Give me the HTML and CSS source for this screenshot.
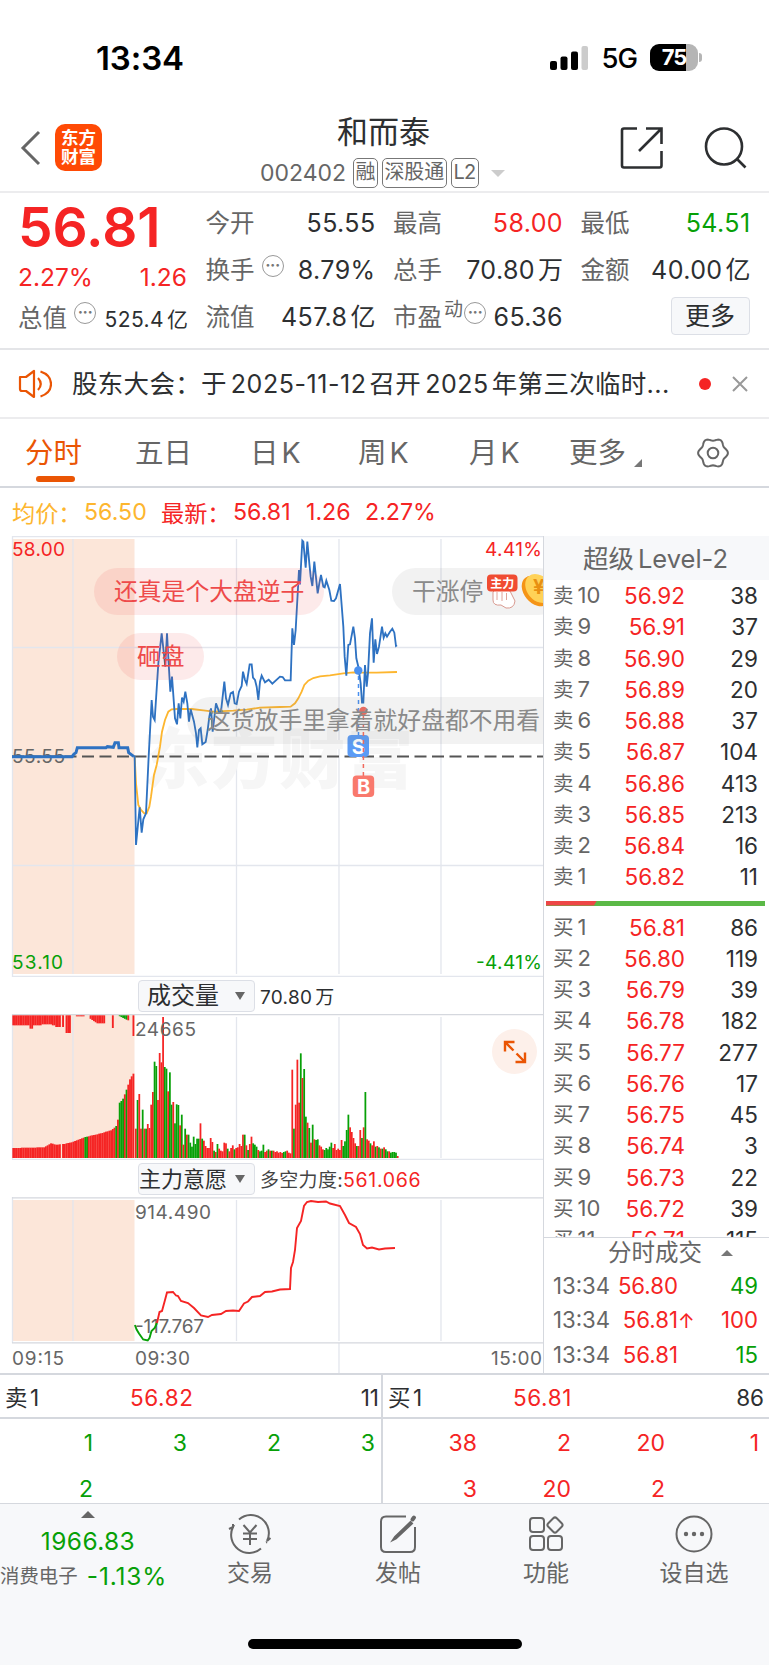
FILE: index.html
```html
<!DOCTYPE html>
<html lang="zh-CN">
<head>
  <meta charset="UTF-8" />
  <meta name="viewport" content="width=device-width, initial-scale=1.0"/>
  <title>和而泰 002402</title>
  <link rel="stylesheet" href="styles.css">
</head>
<body>
  <div class="status-bar">
    <span class="clock">13:34</span>
    <div class="status-right">
      <svg class="signal" width="38" height="24" viewBox="0 0 38 24">
        <rect x="0" y="15" width="7" height="9" rx="2"/>
        <rect x="10.5" y="10.5" width="7" height="13.5" rx="2"/>
        <rect x="21" y="5.500" width="7" height="18.500" rx="2"/>
        <rect x="31.500" y="0" width="6.500" height="24" rx="2" fill="#ccc"/>
      </svg>
      <span class="network">5G</span>
      <div class="battery"><span>75</span></div>
      <i class="battery-tip"></i>
    </div>
  </div>

  <header class="header">
    <svg class="back" width="22" height="36" viewBox="0 0 22 36"><path d="M19 2L3 18L19 34" fill="none" stroke="#666" stroke-width="3"/></svg>
    <div class="logo"><span>东方</span><span>财富</span></div>
    <div class="title">
      <h1>和而泰</h1>
      <div class="code">
        <span class="code-num">002402</span>
        <span class="tag">融</span><span class="tag">深股通</span><span class="tag">L2</span>
        <i class="caret"></i>
      </div>
    </div>
    <svg class="share" width="44" height="44" viewBox="0 0 44 44" fill="none" stroke="#2d2f31" stroke-width="2.600">
      <path d="M17 2.500H4Q2 2.500 2 4.500V39.500Q2 41.500 4 41.500H39.500Q41.500 41.500 41.500 39.500V25M26 2.500H41.500V18M41 3L19 25"/>
    </svg>
    <svg class="search" width="44" height="44" viewBox="0 0 44 44" fill="none" stroke="#2d2f31" stroke-width="2.600">
      <circle cx="20" cy="20.500" r="18"/><path d="M33 33L41.500 41.500"/>
    </svg>
  </header>

  <section class="quote">
    <div class="col main">
      <div class="price red">56.81</div>
      <div class="row change red"><span>2.27%</span><span>1.26</span></div>
      <div class="row total"><span class="label">总值</span><i class="info">···</i><b>525.4<em>亿</em></b></div>
    </div>
    <div class="col">
      <div class="row"><span class="label">今开</span><b>55.55</b></div>
      <div class="row"><span class="label">换手</span><i class="info">···</i><b>8.79%</b></div>
      <div class="row"><span class="label">流值</span><b>457.8<em>亿</em></b></div>
    </div>
    <div class="col">
      <div class="row"><span class="label">最高</span><b class="red">58.00</b></div>
      <div class="row"><span class="label">总手</span><b>70.80<em>万</em></b></div>
      <div class="row"><span class="label">市盈</span><span class="dyn">动</span><i class="info tight">···</i><b>65.36</b></div>
    </div>
    <div class="col">
      <div class="row"><span class="label">最低</span><b class="green">54.51</b></div>
      <div class="row"><span class="label">金额</span><b>40.00<em>亿</em></b></div>
      <div class="row"><button class="more">更多</button></div>
    </div>
  </section>

  <section class="notice">
    <svg width="34" height="30" viewBox="0 0 34 30" fill="none" stroke="#ea5504" stroke-width="2.200" stroke-linejoin="round">
      <path d="M2 8H8L16 2V28L8 22H4Q2 22 2 20ZM20 9Q25.500 15 20 21M22.500 2.500Q33 6 33 15T22.500 27.500"/>
    </svg>
    <p>股东大会：于<span>2025-11-12</span>召开<span>2025</span>年第三次临时...</p>
    <i class="dot"></i>
    <svg class="close" width="16" height="16" viewBox="0 0 16 16" stroke="#999" stroke-width="2"><path d="M1 1L15 15M15 1L1 15"/></svg>
  </section>

  <nav class="tabs">
    <a class="active">分时</a>
    <a>五日</a>
    <a>日<span>K</span></a>
    <a>周<span>K</span></a>
    <a>月<span>K</span></a>
    <a class="tab-more">更多<i></i></a>
    <svg width="34" height="34" viewBox="-17 -17 34 34" fill="none" stroke="#666" stroke-width="2">
      <circle r="5.300"/>
      <path id="gear" stroke-linejoin="round"/>
    </svg>
  </nav>

  <div class="board">
    <div class="charts">
      <div class="legend">
        <span class="avg">均价：</span><span class="avg n1">56.50</span>
        <span class="red n2">最新：</span><span class="red n3">56.81</span><span class="red n4">1.26</span><span class="red">2.27%</span>
      </div>

      <div class="price-chart">
        <svg width="543" height="441" viewBox="0 536 543 441">
          <rect class="band" x="12" y="539" width="122.500" height="435"/>
          <path class="grid" d="M12.500 977V536.500H543.500M12 976.500H543M73 539V974M236.500 539V974M339 539V974M441 539V974M12 647.500H543M12 865.500H543"/>
          <text class="watermark" x="143" y="783" textLength="270">东方财富</text>
          <path class="dash" d="M12 756.500H543"/>
          <text class="tick red" x="12" y="555.500" textLength="53">58.00</text>
          <text class="tick" x="12" y="763" textLength="53">55.55</text>
          <text class="tick green" x="12" y="968.500" textLength="51">53.10</text>
          <text class="tick red" x="485" y="555.500" textLength="57">4.41%</text>
          <text class="tick green" x="476" y="968.500" textLength="66">-4.41%</text>
          <g transform="translate(0 530) scale(.33333)">
            <polyline class="line pre" points="36,680 200,680 216,680 222,672 228,668 232,653 318,653 322,650 340,652 345,638 355,638 357,653 383,653 386,668 402,680"/>
            <polyline class="line avg-line" points="404,680 408,760 415,825 423,840 433,850 440,850 448,830 453,800 462,735 470,705 480,650 486,605 495,570 505,545 515,538 530,537 575,537 610,541 640,545 700,542 740,539 780,533 840,531 872,530 885,520 895,505 905,485 913,465 925,452 940,444 960,439 990,436 1030,430 1060,427 1075,428 1130,428 1191,426"/>
            <polyline class="line" points="402,680 404,680 408,945 419,832 425,908 430,868 438,850 446,680 455,510 459,560 464,570 475,400 485,310 496,410 501,310 506,400 511,485 516,440 525,565 531,583 536,520 541,565 546,503 551,515 556,485 562,520 567,575 572,538 582,575 588,610 592,652 597,600 602,595 607,643 617,636 623,600 628,560 633,535 638,605 648,520 658,548 663,545 673,455 678,505 684,525 692,490 699,486 704,520 710,522 717,485 725,468 729,425 735,450 740,462 749,403 755,403 759,443 765,450 770,470 775,510 780,455 785,437 795,457 806,449 817,461 840,440 848,441 855,451 872,451 877,295 882,345 887,300 897,120 900,163 907,32 910,35 917,113 922,35 928,100 932,140 937,168 943,95 953,190 958,160 963,135 970,170 974,172 979,152 988,180 994,212 1002,213 1008,205 1020,162 1030,290 1034,380 1039,437 1045,345 1050,343 1060,290 1065,325 1069,385 1075,410 1082,460 1086,518 1090,518 1095,405 1100,470 1104,430 1110,310 1116,265 1121,398 1126,328 1131,372 1137,350 1146,290 1151,323 1156,310 1161,320 1170,305 1177,296 1183,308 1188,348 1191,346"/>
          </g>
          <circle cx="358.300" cy="670.500" r="4.200" fill="#4a90f0"/>
          <path d="M358.500 676V735" stroke="#4a90f0" stroke-width="1.500" stroke-dasharray="4 4"/>
          <rect x="347.500" y="735" width="21.500" height="22" rx="4" fill="#5b9bf5"/>
          <text class="mark" x="358.200" y="753.500">S</text>
          <circle cx="363.400" cy="711" r="4.200" fill="#f26a5e"/>
          <path d="M363.400 716V776" stroke="#f26a5e" stroke-width="1.500" stroke-dasharray="4 4"/>
          <rect x="352.700" y="775.500" width="21.500" height="21.500" rx="4" fill="#f9796d"/>
          <text class="mark" x="363.500" y="793.500">B</text>
        </svg>
        <div class="bubble hot b1">还真是个大盘逆子</div>
        <div class="bubble hot b2">砸盘</div>
        <div class="bubble b3">干涨停
          <svg width="62" height="38" viewBox="0 0 62 38">
            <path d="M9 20Q14 14 18 18Q22 16 26 19L31 29Q30 37 22 36L17 33Q9 34 9 28Z" fill="#fff" stroke="#d99a90"/>
            <path d="M13 20V28M18 20V29M22.500 21V28" stroke="#e0a49a"/>
            <rect x="3" y="2.500" width="30.500" height="17" rx="4" fill="#f04c32"/>
            <text x="18.200" y="15.500" class="fist-text">主力</text>
            <ellipse cx="52" cy="19" rx="12" ry="17" fill="#f59416" transform="rotate(-40 52 19)"/>
            <ellipse cx="55" cy="16.500" rx="12" ry="16" fill="#ffd257" transform="rotate(-40 55 16.500)"/>
            <text x="49" y="22" class="coin-text">¥</text>
          </svg>
        </div>
        <div class="bubble b4">这货放手里拿着就好盘都不用看</div>
      </div>

      <div class="picker-row"><button class="picker">成交量<i></i></button><span>70.80<em>万</em></span></div>

      <div class="volume-chart">
        <svg width="543" height="146" viewBox="0 1014 543 146">
          <rect class="band" x="12" y="1015" width="122.500" height="143"/>
          <path class="grid" d="M12.500 1014V1159M73 1017V1158M236.500 1017V1158M339 1017V1158M441 1017V1158M12 1159.500H543"/>
          <path class="grid strong" d="M12 1014.500H543"/>
          <g id="volume" transform="translate(0 970) scale(.33333)"></g>
          <text class="tick" x="135" y="1036" textLength="61">24665</text>
        </svg>
        <div class="expand">
          <svg width="24" height="24" viewBox="0 0 24 24" fill="none" stroke="#ea5504" stroke-width="2.400">
            <path d="M11.500 2H2V11.500M2 2L10.500 10.500M12.500 22H22V12.500M22 22L13.500 13.500"/>
          </svg>
        </div>
      </div>

      <div class="picker-row"><button class="picker wide">主力意愿<i></i></button><span class="force">多空力度:<b class="red">561.066</b></span></div>

      <svg class="force-chart" width="543" height="176" viewBox="0 1197 543 176">
        <rect class="band" x="12" y="1200" width="122.500" height="141"/>
        <path class="grid" d="M12.500 1197V1343M73 1200V1341M236.500 1200V1341M339 1200V1341M339 1343V1373M441 1200V1341"/>
        <path class="grid strong" d="M12 1197.800H543M12 1342.800H543"/>
        <text class="tick" x="135" y="1219" textLength="76">914.490</text>
        <text class="tick" x="135" y="1333" textLength="69">-117.767</text>
        <polyline class="line down" points="134.900,1325 136.600,1329.500 139,1333.500 143.200,1339.500 147.700,1340.500 149.500,1338 151.500,1331 154.700,1328 157,1323"/>
        <polyline class="line up" points="157,1323 159.500,1312 162,1311 165,1300 167,1292.500 173,1292 176,1295.500 178,1296 181,1301 188,1303 194,1308 201,1315.500 208,1317 212,1315 221,1314 226,1311 233,1310.500 239,1311 244,1303.500 248,1301.500 252,1297 260,1296 265,1292 272,1291.500 280,1289.500 290,1289 291,1268 293,1262 295,1250 297,1228 301,1221 304,1206 307,1202 311,1201 318,1202 326,1201.500 330,1203.500 340,1206 345,1215 349,1223 356,1227 360,1234 363,1245 367,1248.500 372,1247.500 379,1249.500 385,1248.500 395,1248"/>
        <text class="tick" x="12" y="1365" textLength="52">09:15</text>
        <text class="tick" x="135" y="1365" textLength="55">09:30</text>
        <text class="tick" x="491" y="1365" textLength="51">15:00</text>
      </svg>
    </div>

    <aside class="book">
      <h2>超级<span>Level-2</span></h2>
      <div class="levels" id="asks"></div>
      <div class="ratio"><i></i></div>
      <div class="levels bids" id="bids"></div>
      <div class="deals">
        <h3>分时成交<i></i></h3>
        <div class="deal"><span>13:34</span><b>56.80</b><em class="green">49</em></div>
        <div class="deal"><span>13:34</span><b>56.81<u>↑</u></b><em class="red">100</em></div>
        <div class="deal"><span>13:34</span><b>56.81</b><em class="green">15</em></div>
      </div>
    </aside>
  </div>

  <section class="queue">
    <div class="side">
      <div class="best"><span>卖1</span><b class="red">56.82</b><span>11</span></div>
      <div class="orders green"><span>1</span><span>3</span><span>2</span><span>3</span><span>2</span></div>
    </div>
    <div class="side">
      <div class="best"><span>买1</span><b class="red">56.81</b><span>86</span></div>
      <div class="orders red"><span>38</span><span>2</span><span>20</span><span>1</span><span>3</span><span>20</span><span>2</span></div>
    </div>
  </section>

  <footer class="bottom">
    <div class="sector">
      <i class="up-tri"></i>
      <div class="index green">1966.83</div>
      <div class="sector-name">消费电子<b class="green">-1.13%</b></div>
    </div>
    <div class="action">
      <svg width="44" height="40" viewBox="-22 -20 44 40" fill="none" stroke="#666" stroke-width="2">
        <path d="M-11 -14.500A18 18 0 0 1 17 7L20.500 4M17 8L16 8.500M11 14.500A18 18 0 0 1 -17 -7L-21 -5M-17 -10V-6"/>
        <path d="M-6.500 -9L0 -1.500L6.500 -9M0 -1.500V11M-7 -.5H7M-7 5H7"/>
      </svg>
      交易
    </div>
    <div class="action">
      <svg width="44" height="40" viewBox="-22 -20 44 40" fill="none" stroke="#666" stroke-width="2">
        <path d="M8 -17.500H-12Q-17 -17.500 -17 -12.500V13Q-17 18 -12 18H12Q17 18 17 13V-7"/>
        <path d="M12.500 -12L-3 3L-5 6L-2 4.500L14 -10.500Z" fill="#666"/><path d="M14.500 -14.500L16 -16.500" stroke-width="4" stroke-linecap="round"/>
      </svg>
      发帖
    </div>
    <div class="action">
      <svg width="44" height="40" viewBox="-22 -20 44 40" fill="none" stroke="#666" stroke-width="2">
        <rect x="-16" y="-16" width="14" height="14" rx="3"/><rect x="-16" y="2" width="14" height="14" rx="3"/><rect x="2" y="2" width="14" height="14" rx="3"/>
        <rect x="3" y="-15" width="12" height="12" rx="2.500" transform="rotate(45 9 -9)"/>
      </svg>
      功能
    </div>
    <div class="action">
      <svg width="44" height="40" viewBox="-22 -20 44 40" fill="none" stroke="#666" stroke-width="2">
        <circle r="17.500"/><g fill="#666" stroke="none"><circle cx="-8" r="2.200"/><circle r="2.200"/><circle cx="8" r="2.200"/></g>
      </svg>
      设自选
    </div>
    <div class="home-bar"></div>
  </footer>

  <script src="script.js"></script>
</body>
</html>
```
FILE: styles.css
```css
:root {
  --red: #f52424;
  --green: #07a007;
  --orange: #ea5504;
  --text: #2d2f31;
  --gray: #666;
  --line: #d5d8de;
  --panel: #f7f8fa;
}

* {
  box-sizing: border-box;
}

body {
  margin: 0;
  width: 769px;
  height: 1665px;
  overflow: hidden;
  background: #fff;
  color: var(--text);
  font-family: Inter, "Noto Sans CJK SC", sans-serif;
  font-size: 24px;
}

h1, h2, h3, p { margin: 0; font-weight: 400; }
b, em, i, u { font-weight: 400; font-style: normal; text-decoration: none; }
svg { display: block; flex: none; }

.red { color: var(--red); }
.green { color: var(--green); }

/* status bar */
.status-bar {
  display: flex;
  justify-content: space-between;
  align-items: center;
  height: 115px;
  padding: 0 67px 0 96px;
  color: #000;
}

.clock { font-size: 33px; font-weight: 600; letter-spacing: -.1px; }
.status-right { display: flex; align-items: center; }
.network { margin: 0 13px 0 13px; font-size: 27.500px; font-weight: 500; letter-spacing: -1px; }

.battery {
  width: 48px;
  height: 27px;
  border-radius: 9px;
  background: linear-gradient(90deg, #000 76%, #b5b5b5 76%);
  color: #fff;
  font-size: 22px;
  font-weight: 700;
  line-height: 27px;
  text-align: center;
  letter-spacing: -1px;
}

.battery-tip { width: 3px; height: 9px; margin-left: 1px; border-radius: 0 3px 3px 0; background: #b5b5b5; }

/* header */
.header {
  display: flex;
  align-items: flex-start;
  height: 78px;
  padding-left: 20px;
  border-bottom: 2px solid #ececee;
}

.back { margin-top: 15px; }

.logo {
  display: flex;
  flex-direction: column;
  align-items: center;
  width: 47px;
  height: 47px;
  margin: 9px 0 0 13px;
  padding-top: 4px;
  border-radius: 10px;
  background: #ff4a05;
  color: #fff;
  font-size: 17.5px;
  font-weight: 700;
  line-height: 19px;
}

.title { width: 518px; }
.title h1 { width: 563px; font-size: 31px; line-height: 33px; text-align: center; }
.code { display: flex; align-items: center; margin-top: 9px; padding-left: 158px; height: 32px; color: var(--gray); }
.code-num { width: 93px; font-size: 23px; }
.tag { height: 30px; margin-right: 4px; padding: 0 1.500px; border: 1.500px solid #777; border-radius: 5px; font-size: 20px; line-height: 27px; letter-spacing: -.1px; }
.tag:nth-child(4) { padding: 0 2px; letter-spacing: -.8px; }
.caret { margin-left: 8px; border: 7px solid transparent; border-top-color: #ccc; border-bottom: 0; }
.share { margin-top: 11px; }
.search { margin: 11px 0 0 40px; }

/* quote summary */
.quote {
  display: grid;
  grid-template-columns: 169px 169px 169px 169px;
  column-gap: 18.500px;
  height: 157px;
  padding: 7px 0 0 18px;
  border-bottom: 2px solid #e4e5e8;
}

.row { display: flex; align-items: center; height: 47px; line-height: 47px; font-size: 24.500px; }
.row b { margin-left: auto; margin-right: -1px; font-size: 25px; letter-spacing: .4px; }
.row em { margin-left: 3px; letter-spacing: 0; }
.label { color: var(--gray); }
.price { height: 54px; font-size: 55px; font-weight: 600; line-height: 54px; }
.change { height: 46px; justify-content: space-between; }
.main .total { height: 40px; margin-top: -1px; line-height: 40px; }
.main .total b { padding-top: 2px; font-size: 21px; }
.total .label { margin-top: -2px; }
.total em { font-size: 21px; }

.info {
  width: 22px;
  height: 22px;
  margin: 0 0 10px 7px;
  border: 1.500px solid #999;
  border-radius: 50%;
  color: #777;
  font-size: 16px;
  font-weight: 700;
  line-height: 18px;
  text-align: center;
  letter-spacing: -.5px;
}

.info.tight { margin-left: 1px; }
.total .info { margin-bottom: 12px; }
.dyn { margin: 0 0 16px 2px; color: var(--gray); font-size: 19px; line-height: 20px; }

.more {
  width: 79px;
  height: 38px;
  margin: -4px 0 0 auto;
  padding: 0;
  border: 1.500px solid #dcdfe6;
  border-radius: 4px;
  background: var(--panel);
  color: var(--text);
  font: 25px/34px Inter, "Noto Sans CJK SC", sans-serif;
}

/* notice */
.notice {
  display: flex;
  align-items: center;
  height: 69px;
  padding: 0 21px 0 18px;
  border-bottom: 2px solid #ececee;
}

.notice p { width: 620px; margin: -5px 0 0 20px; font-size: 25.500px; letter-spacing: .3px; white-space: nowrap; }
.notice p span { margin: 0 3px 0 4px; font-size: 25px; letter-spacing: .55px; }
.dot { width: 12px; height: 12px; margin-left: 7px; border-radius: 50%; background: var(--red); }
.close { margin-left: auto; }

/* tabs */
.tabs {
  display: flex;
  align-items: center;
  height: 69px;
  padding-left: 25px;
  border-bottom: 2px solid var(--line);
  color: var(--gray);
  font-size: 28.500px;
}

.tabs a { position: relative; width: 110px; line-height: 66px; white-space: nowrap; }
.tabs a span { margin-left: 3px; }
.tabs a:nth-child(3) { margin-left: 5px; width: 108px; }
.tabs a:nth-child(4) { width: 111px; }
.tabs .active { color: var(--orange); }

.tabs .active::after {
  content: "";
  position: absolute;
  left: 11px;
  bottom: 4px;
  width: 39px;
  height: 6px;
  border-radius: 3px;
  background: var(--orange);
}

.tabs .tab-more { width: 127px; margin-left: -10px; }
.tab-more i { display: inline-block; margin-left: 8px; border-left: 8px solid transparent; border-bottom: 8px solid #777; vertical-align: -4px; }

/* charts + order book */
.board { display: flex; height: 885px; }
.charts { width: 543px; }
.legend { display: flex; align-items: center; height: 48px; padding-left: 12px; font-size: 23.200px; white-space: nowrap; }
.avg { color: #fdb62f; }
.n1 { width: 77px; }
.legend > .avg:first-child { width: 72px; }
.n2 { width: 72px; }
.n3 { width: 73px; }
.n4 { width: 59px; }

.price-chart { position: relative; height: 441px; overflow: hidden; }
.band { fill: #fce6d9; }
.grid { fill: none; stroke: #e3e6ed; stroke-width: 1.300; }
.grid.strong { stroke: var(--line); }
.dash { stroke: #555; stroke-width: 1.900; stroke-dasharray: 12 5.500; }
.tick { fill: var(--gray); font-size: 19px; }
.tick.red { fill: var(--red); }
.tick.green { fill: var(--green); }
.line { fill: none; stroke: #2e72c2; stroke-width: 5.500; }
.line.pre { stroke-width: 9; }
.line.avg-line { stroke: #fdb62f; }
.line.down { stroke: var(--green); stroke-width: 1.900; }
.line.up { stroke: var(--red); stroke-width: 1.900; }
.watermark { fill: #f6f6f6; font-size: 66px; font-weight: 900; }
.mark { fill: #fff; font-size: 20px; font-weight: 700; text-anchor: middle; }

.bubble {
  position: absolute;
  height: 47px;
  padding: 0 19px 0 20px;
  border-radius: 24px;
  background: rgba(130, 130, 130, .1);
  color: #8a8a8a;
  font-size: 23.800px;
  line-height: 47px;
  white-space: nowrap;
}

.bubble.hot { background: rgba(235, 60, 60, .11); color: #ee4a4a; }
.b1 { left: 94px; top: 32px; width: 230px; }
.b2 { left: 117px; top: 97px; width: 87px; }
.b3 { left: 392px; top: 32px; width: 170px; display: flex; }
.b3 svg { margin: 4px 0 0 1px; }
.b4 { left: 187px; top: 161px; width: 380px; line-height: 48px; }
.fist-text { fill: #fff; font-size: 12px; font-weight: 700; text-anchor: middle; }
.coin-text { fill: #e89012; font-size: 20px; font-weight: 700; }

.picker-row { display: flex; align-items: center; height: 37px; padding-left: 138px; font-size: 19px; }
.picker-row em { margin-left: 3px; }
.picker-row > span { margin: -1px 0 0 5px; letter-spacing: .3px; }

.picker {
  display: flex;
  align-items: center;
  width: 117px;
  height: 32px;
  padding: 0 9px 0 8px;
  border: 1px solid #dcdfe6;
  border-radius: 4px;
  background: var(--panel);
  color: var(--text);
  font: 24px/30px Inter, "Noto Sans CJK SC", sans-serif;
  white-space: nowrap;
}

.picker.wide { padding-left: 0; font-size: 22px; }
.picker i { flex: none; margin-left: auto; border: 5px solid transparent; border-top: 8px solid #666; border-bottom: 0; }
.force { color: #444; }
.force b { font-size: 19.500px; letter-spacing: .7px; }
.volume-chart { position: relative; height: 146px; }

.expand {
  position: absolute;
  left: 492px;
  top: 15px;
  width: 45px;
  height: 45px;
  padding: 10.500px;
  border-radius: 50%;
  background: #fdf0ea;
}

/* order book */
.book { width: 226px; height: 837px; margin-top: 48px; border-left: 1.500px solid var(--line); }
.book h2 { height: 44px; background: var(--panel); color: var(--gray); font-size: 25.500px; line-height: 45px; text-align: center; padding-right: 2px; }
.book h2 span { margin-left: 4px; }
.level { display: flex; height: 31.260px; padding: 0 11px 0 9px; line-height: 31px; font-size: 22.500px; }
.level span { width: 61px; color: var(--gray); font-size: 20.500px; }
.level span u { margin-left: 4px; font-size: 22px; }
.level b { width: 71px; color: var(--red); text-align: right; }
.level em { margin-left: auto; }

.ratio { height: 5px; margin: 8px 4px 6px 2px; background: #5bb947; }
.ratio i { display: block; width: 51px; height: 5px; background: #ee4646; clip-path: polygon(0 0, 100% 0, 94% 100%, 0 100%); }
.bids { height: 325px; overflow: hidden; }

.deals { border-top: 1.500px solid var(--line); }
.deals h3 { display: flex; align-items: center; justify-content: center; height: 31px; color: var(--gray); font-size: 23.500px; line-height: 30px; padding-left: 28px; }
.deals h3 i { margin-left: 19px; border: 6px solid transparent; border-bottom: 6px solid #777; border-top: 0; }
.deal { display: flex; height: 34.500px; padding: 0 11px 0 9px; line-height: 34.500px; font-size: 22.200px; }
.deal span { width: 58px; color: var(--gray); }
.deal b { width: 67px; color: var(--red); text-align: right; white-space: nowrap; }
.deal u { display: inline-block; width: 14px; margin-right: -14px; font-size: 20px; }
.deal em { margin-left: auto; }

/* best bid/ask queue */
.queue { display: flex; height: 131px; border-top: 2px solid var(--line); border-bottom: 1.500px solid var(--line); }
.side { width: 386px; overflow: hidden; }
.side:first-child { width: 383px; border-right: 2px solid var(--line); }
.best { display: flex; height: 44px; padding: 0 5px 0 5px; border-bottom: 2px solid var(--line); line-height: 45px; font-size: 22.500px; }
.side:first-child .best { padding-right: 2px; }
.best b { letter-spacing: .6px; }
.best span:first-child { width: 125px; letter-spacing: 2.500px; }
.best span:last-child { margin-left: auto; }
.orders { display: grid; grid-template-columns: repeat(4, 94px); padding-top: 2px; font-size: 23px; line-height: 45.500px; text-align: right; }
.side:first-child .orders { margin-left: -1px; }

/* bottom bar */
.bottom { display: flex; flex-wrap: wrap; align-content: flex-start; height: 162px; background: var(--panel); color: var(--gray); }
.sector { width: 176px; height: 120px; }
.up-tri { display: block; width: 0; margin: 7px 0 0 81px; border: 7px solid transparent; border-bottom-color: #666; border-top: 0; }
.index { margin-top: 6px; text-align: center; font-size: 24.500px; line-height: 34px; letter-spacing: .4px; }
.sector-name { display: flex; align-items: center; justify-content: space-between; width: 167px; margin-top: 1px; font-size: 19.400px; line-height: 34px; white-space: nowrap; }
.sector-name b { font-size: 24.500px; letter-spacing: .8px; }
.action { display: flex; flex-direction: column; align-items: center; width: 148px; padding-top: 10px; font-size: 23px; line-height: 39px; }
.home-bar { width: 274px; height: 10px; margin: 15px auto 0 248px; border-radius: 5px; background: #000; }
```
FILE: script.js
```js
const RED = '#f52424';
const GREEN = '#07a007';

// order book
const asks = [
  [10, '56.92', 38], [9, '56.91', 37], [8, '56.90', 29], [7, '56.89', 20], [6, '56.88', 37],
  [5, '56.87', 104], [4, '56.86', 413], [3, '56.85', 213], [2, '56.84', 16], [1, '56.82', 11]
];
const bids = [
  [1, '56.81', 86], [2, '56.80', 119], [3, '56.79', 39], [4, '56.78', 182], [5, '56.77', 277],
  [6, '56.76', 17], [7, '56.75', 45], [8, '56.74', 3], [9, '56.73', 22], [10, '56.72', 39], [11, '56.71', 115]
];

function renderLevels(id, name, rows) {
  document.getElementById(id).innerHTML = rows.map(([n, price, vol]) =>
    `<div class="level"><span>${name}<u>${n}</u></span><b>${price}</b><em>${vol}</em></div>`
  ).join('');
}

renderLevels('asks', '卖', asks);
renderLevels('bids', '买', bids);

// volume bars, negative = green
const volume = [
  88, -174, 192, 88, -145, 88, -88, 102, 90, 160, 198, -289, -276, 174, 315, 287, 423, -273, -268, 200,
  -257, -160, 168, -104, -161, -159, 98, -130, 40, -88, 70, -70, -46, -34, -64, -42, -58, -58, 104, -58,
  52, 36, 30, 30, 60, 48, -22, 18, -42, 28, 22, 20, 46, 44, -28, 20, 30, 38, -26, 30, 32, 42, 36, 70, -70,
  38, -24, 42, 64, -44, -40, -34, 24, -20, -22, -40, 18, 22, -26, 22, -22, 22, 18, 20, 16, 18, 15, -18, -20,
  22, 16, 14, 265, -88, 160, 295, 166, -314, 240, -267, -124, 106, -90, 46, -100, 56, -54, -56, 38, 34, 26,
  -24, -30, -26, -34, -46, 30, 42, 24, 28, 24, 54, -36, -50, -84, -130, 92, 78, 60, 44, -36, 36, 84, -60,
  92, -198, 56, 52, -44, 38, 50, -34, 36, -32, 28, -28, 32, -26, -20, 20, -16, -18, -18, -16, 6
];

let bars = '';
function bar(x, y, w, h, color) {
  bars += `<rect x="${x.toFixed(1)}" y="${y}" width="${w}" height="${h}" fill="${color}"/>`;
}

volume.forEach((v, i) => bar(405 + i * 5.1, 564 - Math.abs(v), 5.3, Math.abs(v), v < 0 ? GREEN : RED));

// call auction: matched volume at the bottom, unmatched hanging from the top
const matched = [[37, 30], [130, 32], [150, 44], [165, 40], [190, 42], [215, 48], [250, 62], [300, 74], [333, 84],
  [350, 100], [355, 165], [366, 176], [378, 208], [388, 238], [396, 250], [404, 268]];

function matchedAt(x) {
  for (let i = 1; i < matched.length; i++) {
    const [x0, h0] = matched[i - 1];
    const [x1, h1] = matched[i];
    if (x <= x1) return Math.round(h0 + (h1 - h0) * (x - x0) / (x1 - x0));
  }
  return 267;
}

function hangingAt(x) {
  if (x < 192) return x > 88 && x < 98 ? 40 : x > 165 ? 35 : x > 125 && x < 155 ? 27 : 30;
  if (x > 196 && x < 213) return 53;
  if (x > 228 && x < 250) return 3;
  if (x > 266 && x < 316) return Math.min(24, 8 + (x - 266) / 1.5);
  if (x > 332 && x < 338) return 38;
  if (x > 355 && x < 388) return Math.min(15, (x - 352) / 2);
  if (x > 397) return 62;
  return 0;
}

for (let x = 37; x < 400; x += 5.15) {
  const green = (x > 250 && x < 260) || (x > 341 && x < 347) || (x > 354 && x < 371) || (x > 376 && x < 381);
  const h = matchedAt(x);
  bar(x, 564 - h, 5.6, h, green ? GREEN : RED);
  const top = hangingAt(x + 1);
  if (top) bar(x, 136, 5.6, top, x > 354 && x < 380 ? GREEN : RED);
}
// missing minute
bar(183, 136, 3, 428, '#fce6d9');
document.getElementById('volume').innerHTML = bars;

// gear outline with six soft teeth
let gear = '';
for (let a = 0; a < 360; a += 5) {
  const r = 13.6 + 1.3 * Math.cos(a * 6 * Math.PI / 180);
  const t = a * Math.PI / 180;
  gear += (a ? 'L' : 'M') + (r * Math.cos(t)).toFixed(2) + ' ' + (r * Math.sin(t)).toFixed(2);
}
document.getElementById('gear').setAttribute('d', gear + 'Z');
```
